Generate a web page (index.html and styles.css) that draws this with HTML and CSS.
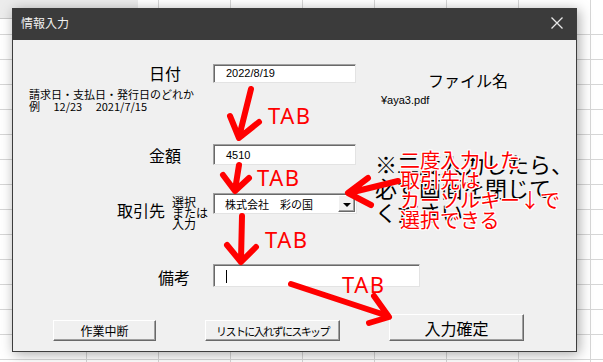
FILE: index.html
```html
<!DOCTYPE html>
<html lang="ja">
<head>
    <meta charset="UTF-8">
    <meta name="viewport" content="width=device-width, initial-scale=1.0">
    <title>情報入力</title>
    <link rel="stylesheet" href="styles.css">
</head>
<body>
    <div class="window">
        <div class="titlebar">
            <span class="title">情報入力</span>
            <svg class="close" width="12" height="12" viewBox="0 0 12 12">
                <path d="M0.5 0.5 L11.5 11.5 M11.5 0.5 L0.5 11.5" stroke="#e8e8e8" stroke-width="1.3" fill="none"/>
            </svg>
        </div>

        <div class="form">
            <div class="section section-top">
                <div class="col-left">
                    <div class="row">
                        <div class="label-cell pad-32"><span class="label">日付</span></div>
                        <div class="textbox box-date">2022/8/19</div>
                    </div>
                    <p class="hint">請求日・支払日・発行日のどれか<br>例　 12/23　 2021/7/15</p>
                </div>
                <div class="col-right">
                    <div class="file-title">ファイル名</div>
                    <div class="file-path">¥aya3.pdf</div>
                </div>
            </div>

            <div class="section section-middle">
                <div class="col-left">
                    <div class="row">
                        <div class="label-cell pad-32"><span class="label">金額</span></div>
                        <div class="textbox box-amount">4510</div>
                    </div>
                    <div class="row row-partner">
                        <div class="label-cell pad-13">
                            <span class="label label-partner">取引先</span>
                            <span class="sublabel">選択<br>または<br>入力</span>
                        </div>
                        <div class="textbox combo">
                            <span class="combo-text">株式会社　彩の国</span>
                            <span class="combo-btn"><span class="tri"></span></span>
                        </div>
                    </div>
                </div>
                <p class="note">※二度入力したら、<br>必ず画面を閉じて<br>ください</p>
            </div>

            <div class="row row-memo">
                <div class="label-cell pad-23"><span class="label label-memo">備考</span></div>
                <div class="textbox box-memo"><span class="caret"></span></div>
            </div>

            <div class="buttons">
                <button type="button" class="btn btn-cancel">作業中断</button>
                <button type="button" class="btn btn-skip">リストに入れずにスキップ</button>
                <button type="button" class="btn btn-ok">入力確定</button>
            </div>
        </div>
    </div>

    <!-- annotations drawn on top of the screenshot -->
    <p class="callout">二度入力した<br>取引先は<br>カーソルキー↓で<br>選択できる</p>
    <span class="tab tab-1">TAB</span>
    <span class="tab tab-2">TAB</span>
    <span class="tab tab-3">TAB</span>
    <span class="tab tab-4">TAB</span>

    <svg class="arrows" width="603" height="362" viewBox="0 0 603 362">
        <g stroke="#ff0000" stroke-width="6" stroke-linecap="round" stroke-linejoin="round" fill="none">
            <path d="M251 89 L239 137 M230 116 L239 138 L259 122"/>
            <path d="M239 165 L235 190 M223 175 L235 191 L249 178"/>
            <path d="M242 216 L241 260 M227 245 L241 262 L256 247"/>
            <path d="M291 284 L388 316 M374 296 L389 317 L369 323"/>
            <path d="M398 181 L349 193 M368 178 L348 193 L371 205"/>
        </g>
    </svg>
</body>
</html>
```

FILE: styles.css
```css
body {
    margin: 0;
    width: 603px;
    height: 362px;
    overflow: hidden;
    position: relative;
    font-family: "Noto Sans CJK JP", sans-serif;
    color: #000;
    background-color: #fff;
    background-image:
        linear-gradient(#c8c8c8, #c8c8c8),
        linear-gradient(#ececec, #ececec),
        repeating-linear-gradient(to bottom, transparent 0 24px, #d6d6d6 24px 25px),
        repeating-linear-gradient(to right, transparent 0 71px, #d6d6d6 71px 72px);
    background-size: 138px 1px, 138px 18px, 100% 100%, 100% 100%;
    background-position: 0 18px, 0 0, 0 10px, 15px 0;
    background-repeat: no-repeat, no-repeat, repeat, repeat;
}
.window {
    position: absolute;
    left: 12px;
    top: 8px;
    width: 565px;
    height: 344px;
    box-sizing: border-box;
    border: 1px solid #3d3d3d;
    border-top: none;
    background: #f0f0f0;
    box-shadow: 2px 2px 12px rgba(0, 0, 0, 0.35);
    display: flex;
    flex-direction: column;
}
.titlebar {
    height: 32px;
    background: #3b3b3b;
    display: flex;
    align-items: center;
    justify-content: space-between;
    padding: 0 13px 2px 8px;
    box-sizing: border-box;
}
.title {
    color: #f0f0f0;
    font-size: 12px;
    line-height: 14px;
}
.close {
    display: block;
}
.form {
    flex: 1;
    position: relative;
}
.section {
    display: flex;
}
.col-left {
    width: 360px;
    flex-shrink: 0;
}
.row {
    display: flex;
    align-items: center;
}
.label-cell {
    width: 200px;
    box-sizing: border-box;
    display: flex;
    justify-content: flex-end;
}
.pad-32 { padding-right: 32px; }
.pad-23 { padding-right: 23px; }
.pad-13 { padding-right: 13px; }
.label {
    font-size: 16px;
    line-height: 20px;
}
.textbox {
    box-sizing: border-box;
    background: #fff;
    border: 1px solid;
    border-color: #a0a0a0 #e3e3e3 #e3e3e3 #a0a0a0;
    box-shadow: inset 1px 1px 0 #696969;
    font-family: "Liberation Sans", "Noto Sans CJK JP", sans-serif;
    font-size: 11px;
    padding-left: 12px;
    display: flex;
    align-items: center;
}

/* top: date + file name */
.section-top .row {
    margin-top: 23px;
}
.box-date {
    width: 143px;
    height: 19px;
}
.hint {
    margin: 5px 0 0 16px;
    font-size: 11px;
    line-height: 12px;
    white-space: nowrap;
}
.file-title {
    margin: 30px 0 0 55px;
    font-size: 16px;
    line-height: 20px;
}
.file-path {
    margin: 3px 0 0 8px;
    font-family: "Liberation Sans", "Noto Sans CJK JP", sans-serif;
    font-size: 11px;
    line-height: 14px;
}

/* middle: amount, partner, note */
.section-middle {
    margin-top: 32px;
}
.box-amount {
    width: 143px;
    height: 21px;
}
.row-partner {
    margin-top: 28px;
    align-items: flex-start;
}
.label-partner {
    margin-top: 7px;
}
.sublabel {
    margin: 3px 0 0 7px;
    font-size: 12px;
    line-height: 11px;
    white-space: nowrap;
    width: 28px;
}
.combo {
    width: 144px;
    height: 21px;
    padding-left: 11px;
    padding-right: 1px;
    justify-content: space-between;
}
.combo-text {
    font-family: "Noto Sans CJK JP", sans-serif;
    font-size: 11px;
}
.combo-btn {
    width: 17px;
    height: 17px;
    box-sizing: border-box;
    background: #f0f0f0;
    border: 1px solid;
    border-color: #fff #696969 #696969 #fff;
    box-shadow: inset -1px -1px 0 #a0a0a0;
    display: flex;
    align-items: center;
    justify-content: center;
}
.tri {
    width: 0;
    height: 0;
    border-left: 4px solid transparent;
    border-right: 4px solid transparent;
    border-top: 4px solid #000;
    margin-top: 2px;
}
.note {
    margin: 7px 0 0 2px;
    font-size: 22px;
    line-height: 24px;
    white-space: nowrap;
}

/* memo */
.row-memo {
    margin-top: 34px;
}
.label-memo {
    padding-top: 4px;
}
.box-memo {
    width: 207px;
    height: 23px;
}
.caret {
    display: block;
    width: 1px;
    height: 13px;
    background: #000;
    margin-top: 2px;
}

/* buttons */
.buttons {
    display: flex;
    align-items: flex-end;
    gap: 49px;
    margin-top: 27px;
    padding-left: 40px;
}
.btn {
    box-sizing: border-box;
    height: 21px;
    background: #f0f0f0;
    border: 1px solid;
    border-color: #fff #696969 #696969 #fff;
    box-shadow: inset -1px -1px 0 #a0a0a0;
    font-family: "Noto Sans CJK JP", sans-serif;
    font-size: 12px;
    color: #000;
    padding: 0;
    white-space: nowrap;
}
.btn-cancel {
    width: 103px;
}
.btn-skip {
    width: 135px;
    font-size: 11px;
    letter-spacing: -1.6px;
}
.btn-ok {
    width: 135px;
    height: 27px;
    font-size: 16px;
}

/* red annotations */
.callout {
    position: absolute;
    left: 400px;
    top: 150px;
    margin: 0;
    color: #ff0000;
    font-size: 20px;
    line-height: 20px;
    white-space: nowrap;
    text-shadow: 1px 0 0 #fff, -1px 0 0 #fff, 0 1px 0 #fff, 0 -1px 0 #fff,
        1px 1px 0 #fff, -1px -1px 0 #fff, 1px -1px 0 #fff, -1px 1px 0 #fff;
}
.tab {
    position: absolute;
    color: #ff0000;
    font-family: "Noto Sans", sans-serif;
    font-size: 22px;
    line-height: 22px;
    letter-spacing: 1.5px;
}
.tab-1 { left: 268px; top: 104px; }
.tab-2 { left: 257px; top: 166px; }
.tab-3 { left: 265px; top: 228px; }
.tab-4 { left: 342px; top: 273px; }
.arrows {
    position: absolute;
    left: 0;
    top: 0;
    pointer-events: none;
}
```
